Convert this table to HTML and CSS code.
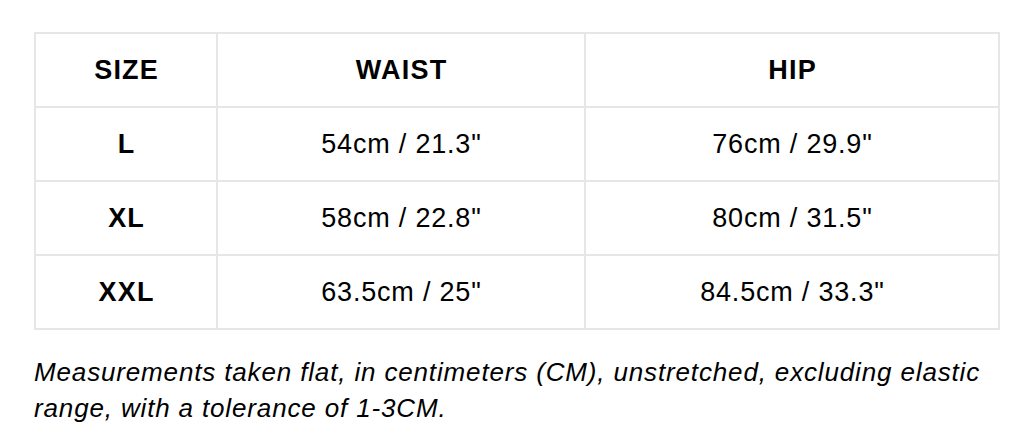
FILE: index.html
```html
<!DOCTYPE html>
<html>
<head>
<meta charset="utf-8">
<link rel="stylesheet" href="styles.css">
</head>
<body>
<div class="wrap">
  <table class="size-table">
    <colgroup>
      <col class="c1"><col class="c2"><col class="c3">
    </colgroup>
    <thead>
      <tr><th>SIZE</th><th>WAIST</th><th>HIP</th></tr>
    </thead>
    <tbody>
      <tr><th>L</th><td>54cm / 21.3"</td><td>76cm / 29.9"</td></tr>
      <tr><th>XL</th><td>58cm / 22.8"</td><td>80cm / 31.5"</td></tr>
      <tr><th>XXL</th><td>63.5cm / 25"</td><td>84.5cm / 33.3"</td></tr>
    </tbody>
  </table>
  <p class="note">Measurements taken flat, in centimeters (CM), unstretched, excluding elastic range, with a tolerance of 1-3CM.</p>
</div>
</body>
</html>
```
FILE: styles.css
```css
html, body {
  margin: 0;
  padding: 0;
  background: #fff;
}
.wrap {
  padding: 32px 30px 0 34px;
  font-family: "Liberation Sans", Arial, sans-serif;
  color: #000;
}
.size-table {
  width: 964px;
  border-collapse: collapse;
  table-layout: fixed;
  font-size: 27px;
}
.c1 { width: 182px; }
.c2 { width: 368px; }
.c3 { width: 414px; }
.size-table th,
.size-table td {
  border: 2px solid #e6e6e6;
  text-align: center;
  line-height: 32px;
  padding: 20px 8px;
}
.size-table th {
  font-weight: bold;
  letter-spacing: 1.2px;
  text-indent: 1.2px;
}
.size-table td {
  font-weight: normal;
  letter-spacing: 0.8px;
  text-indent: 0.8px;
}
.note {
  margin: 24px 0 0 0;
  font-size: 26px;
  font-style: italic;
  line-height: 36px;
  letter-spacing: 0.85px;
}
```
